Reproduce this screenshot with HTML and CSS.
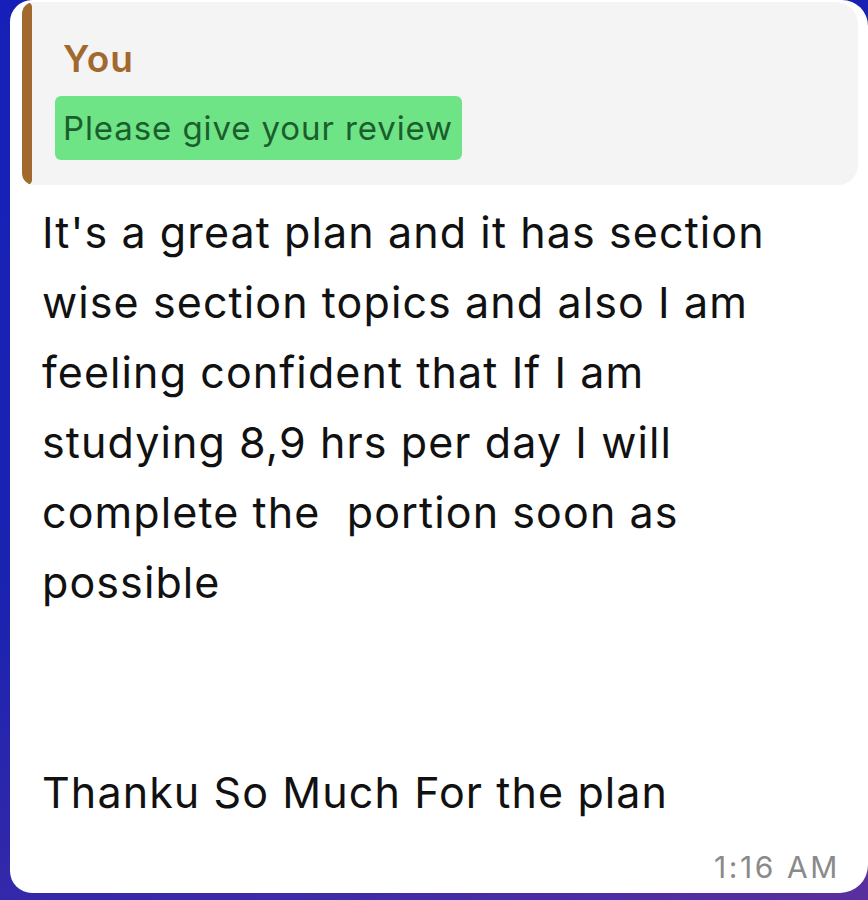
FILE: index.html
```html
<!DOCTYPE html>
<html>
<head>
<meta charset="utf-8">
<link rel="stylesheet" href="styles.css">
</head>
<body>
<div class="bubble">
  <div class="quote">
    <div class="quote-bar"></div>
    <div class="quote-body">
      <div class="quote-author">You</div>
      <div class="quote-text"><span class="hl">Please give your review</span></div>
    </div>
  </div>
  <div class="message">It's a great plan and it has section<br>wise section topics and also I am<br>feeling confident that If I am<br>studying 8,9 hrs per day I will<br>complete the&nbsp; portion soon as<br>possible<br><br><br>Thanku So Much For the plan</div>
  <div class="meta">1:16 AM</div>
</div>
</body>
</html>
```

FILE: styles.css
```css
html, body {
  margin: 0;
  padding: 0;
  width: 868px;
  height: 900px;
  overflow: hidden;
}
body {
  background: linear-gradient(160deg, #1620b8 0%, #1b23b0 50%, #3a2aa8 80%, #5a2f9e 100%);
  font-family: Inter, "Liberation Sans", sans-serif;
  padding-left: 10px;
  box-sizing: border-box;
}
.bubble {
  background: #ffffff;
  width: 858px;
  height: 893px;
  box-sizing: border-box;
  border-radius: 22px 26px 28px 22px;
  padding: 2px 10px 0 12px;
  display: flex;
  flex-direction: column;
}
.quote {
  display: flex;
  background: #f4f4f4;
  border-radius: 12px 22px 20px 12px;
  height: 183px;
  overflow: hidden;
}
.quote-bar {
  width: 10px;
  background: #a1692d;
  border-radius: 6px;
  flex: none;
}
.quote-body {
  padding: 36px 0 0 23px;
}
.quote-author {
  color: #a1692d;
  font-size: 37px;
  font-weight: 600;
  line-height: 42px;
  letter-spacing: 1px;
  padding-left: 8px;
}
.quote-text {
  margin-top: 16px;
}
.hl {
  display: inline-block;
  background: #6ee487;
  color: #1b5e2c;
  font-size: 33px;
  line-height: 64px;
  padding: 0 9px 0 8px;
  border-radius: 6px;
  letter-spacing: 0.9px;
}
.message {
  color: #111111;
  font-size: 43px;
  line-height: 70px;
  margin-top: 12px;
  padding-left: 20px;
  letter-spacing: 1.1px;
}
.meta {
  align-self: flex-end;
  color: #8a8a8a;
  font-size: 30px;
  margin-top: 22px;
  padding-right: 18px;
  letter-spacing: 2.6px;
}
```
